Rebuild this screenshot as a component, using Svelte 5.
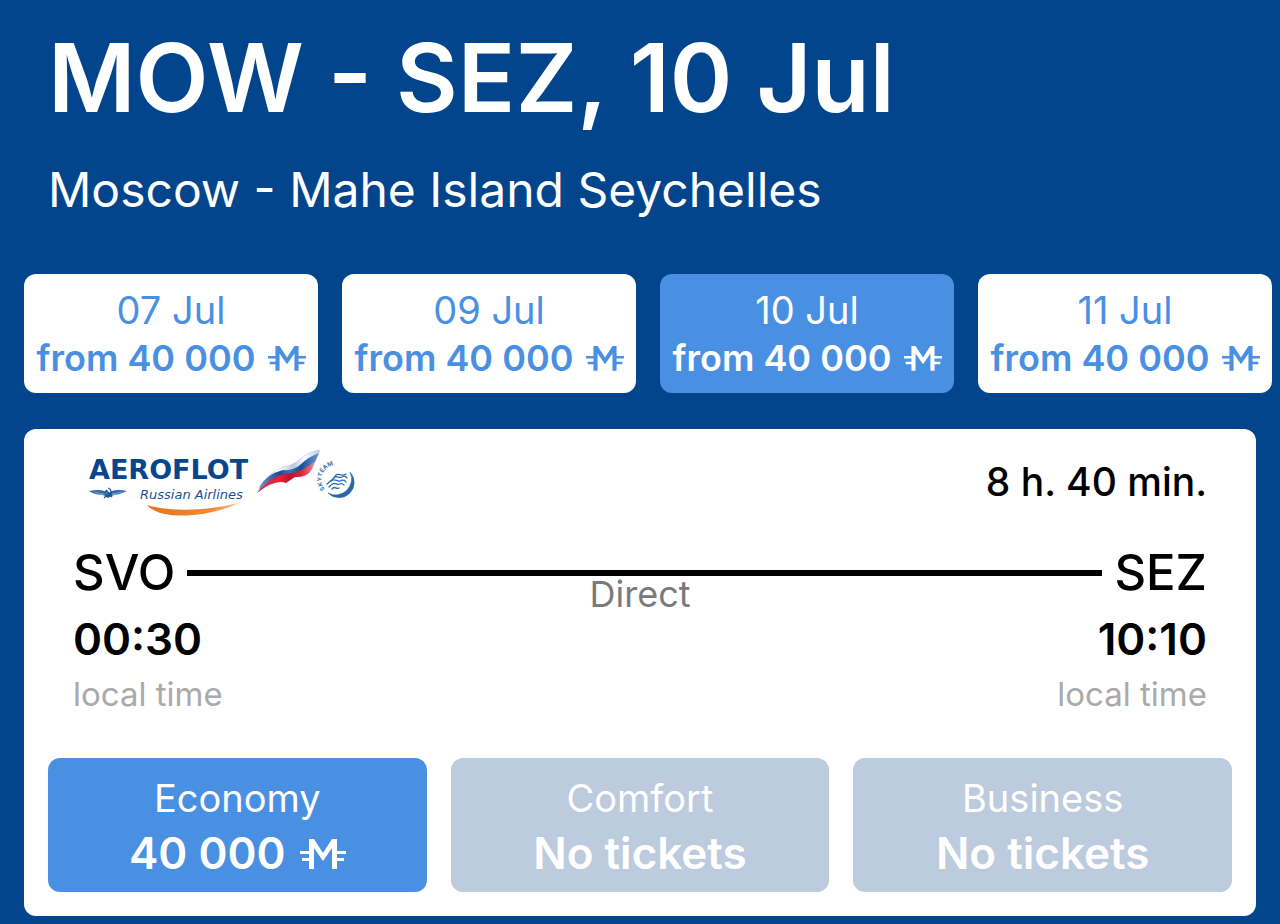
<script>
  const dates = ['07 Jul', '09 Jul', '10 Jul', '11 Jul'];
  let selected = $state('10 Jul');

  const fares = [
    { name: 'Economy', price: '40 000', available: true },
    { name: 'Comfort', price: 'No tickets', available: false },
    { name: 'Business', price: 'No tickets', available: false }
  ];
</script>

{#snippet mile()}
  <svg class="mile" viewBox="0 0 46 30" role="img" aria-label="miles">
    <path d="M9 30V0h5l9 14 9-14h5v30h-5V9l-9 13-9-13v21z M0 12h11v3H0z M2 19h9v3H2z M35 12h11v3H35z M35 19h9v3h-9z" fill="currentColor" />
  </svg>
{/snippet}

<main>
  <header>
    <h1>MOW - SEZ, 10 Jul</h1>
    <p>Moscow - Mahe Island Seychelles</p>
  </header>

  <nav class="dates" aria-label="Departure dates">
    {#each dates as date}
      <button class="date" class:active={selected === date} aria-pressed={selected === date} onclick={() => (selected = date)}>
        <span class="day">{date}</span>
        <span class="from">from 40 000 {@render mile()}</span>
      </button>
    {/each}
  </nav>

  <article class="card">
    <div class="top">
      <svg class="logo" viewBox="0 0 290 76" role="img" aria-label="Aeroflot Russian Airlines, SkyTeam">
        <defs>
          <linearGradient id="swoosh"><stop offset="0" stop-color="#e8741c" /><stop offset=".7" stop-color="#f08a35" /><stop offset="1" stop-color="#f8c795" /></linearGradient>
          <linearGradient id="white"><stop offset="0" stop-color="#cfd9ea" /><stop offset=".35" stop-color="#ffffff" /><stop offset=".58" stop-color="#b9c6dc" /><stop offset=".75" stop-color="#f8fbff" /><stop offset="1" stop-color="#b5cbe2" /></linearGradient>
          <linearGradient id="blue"><stop offset="0" stop-color="#7295cb" /><stop offset=".35" stop-color="#174a9b" /><stop offset=".5" stop-color="#3b72ba" /><stop offset=".7" stop-color="#164e9e" /><stop offset="1" stop-color="#6b9bd0" /></linearGradient>
          <linearGradient id="red"><stop offset="0" stop-color="#b63855" /><stop offset=".4" stop-color="#ed1f35" /><stop offset=".58" stop-color="#b51535" /><stop offset=".75" stop-color="#e3202f" /><stop offset="1" stop-color="#ef8790" /></linearGradient>
          <path id="team-arc" d="M253 44A14 14 0 0 1 275 25" />
        </defs>
        <text class="brand" x="17" y="34">AEROFLOT</text>
        <path d="M17 46Q28 44 32 46L36 48L40 46Q45 44 55 46Q49 49 42 50L36 53L31 50Q23 50 17 46Z" fill="#2d6aa8" />
        <path d="M22 47L32 49M24 49L33 50M40 49L50 47M40 50L48 49" stroke="#9dbdd9" stroke-width=".6" />
        <path d="M36 43A4 4 0 1 1 34 51M34 45L40 52M33 47L35 45M34 51L32 53" fill="none" stroke="#1b5395" stroke-width="1.200" />
        <text class="sub" x="68" y="54">Russian Airlines</text>
        <path d="M75 60C88 76 137 73 169 57C143 65 101 68 75 60Z" fill="url(#swoosh)" />
        <path d="M185 48Q195 27 211 22Q222 20 228 14Q235 7 248 5L240 24Q235 33 222 32C206 30 199 37 185 48Z" fill="url(#white)" stroke="#b6c6dc" stroke-width=".5" />
        <path d="M188 41Q195 29 211 25Q221 26 228 20Q236 12 247 8L243 17Q234 28 223 29Q211 29 204 33Q195 36 187 45Z" fill="url(#blue)" />
        <path d="M185 48Q192 38 202 33Q211 28 221 28Q233 25 243 16L240 24Q235 33 223 32L214 38Q203 34 185 48Z" fill="url(#red)" />
        <text class="team"><textPath href="#team-arc">SKYTEAM</textPath></text>
        <path d="M278 27A15 15 0 0 1 256 48A16 16 0 0 0 278 27Z" fill="#2868aa" stroke="#2868aa" stroke-width=".5" />
        <g fill="none" stroke="#2d6eae" stroke-width="1.300" stroke-linecap="round">
          <path d="M262 33C266 25 268 33 274 29" />
          <path d="M259 36C265 28 266 34 270 32Q273 30 275 33" />
          <path d="M255 39C263 31 264 37 268 36Q272 34 274 37" />
          <path d="M257 42C263 35 264 41 268 39Q270 38 272 40" />
          <path d="M260 44C263 40 264 45 267 43" />
        </g>
      </svg>
      <span class="duration">8 h. 40 min.</span>
    </div>

    <div class="route">
      <span class="airport">SVO</span>
      <span class="line"></span>
      <span class="airport">SEZ</span>
    </div>
    <div class="times">
      <div><time>00:30</time><small>local time</small></div>
      <span class="direct">Direct</span>
      <div class="arrival"><time>10:10</time><small>local time</small></div>
    </div>

    <div class="fares">
      {#each fares as fare}
        <button class="fare" disabled={!fare.available}>
          <span class="name">{fare.name}</span>
          <span class="price">{fare.price}{#if fare.available}{' '}{@render mile()}{/if}</span>
        </button>
      {/each}
    </div>
  </article>
</main>

<style>
  :global(body) { margin: 0; background: #02458d; }
  main { font-family: Inter, sans-serif; color: #fff; padding-bottom: 8px; overflow: hidden; }
  header { padding: 18px 48px 0; }
  h1, p { margin: 0; white-space: nowrap; }
  h1 { font-size: 95px; line-height: 120px; font-weight: 600; }
  p { margin-top: 22px; font-size: 48px; line-height: 60px; }
  button { font-family: inherit; border: 0; border-radius: 12px; display: flex; flex-direction: column; align-items: center; white-space: nowrap; }
  .dates { display: grid; grid-template-columns: repeat(4, 1fr); gap: 24px; padding: 54px 8px 0 24px; }
  .date { background: #fff; color: #4a90e2; padding: 12px 0 11px; }
  .date.active { background: #4a90e2; color: #fff; }
  .day, .name { font-size: 38px; line-height: 48px; font-weight: 400; }
  .from { font-size: 36px; line-height: 48px; font-weight: 600; }
  .mile { display: inline-block; width: 38px; height: auto; margin-left: 3px; }
  .card { margin: 36px 24px 0; padding: 16px 24px 24px; background: #fff; color: #000; border-radius: 12px; }
  .top { display: flex; justify-content: space-between; align-items: flex-start; padding-right: 25px; }
  .logo { width: 290px; height: 76px; margin-left: 24px; }
  .brand { font: bold 27px "DejaVu Sans", sans-serif; fill: #07468e; }
  .sub { font: italic 13px "DejaVu Sans", sans-serif; fill: #174f96; }
  .team { font: bold 6px Inter, sans-serif; fill: #3c75ae; }
  .duration { font-size: 39px; line-height: 48px; font-weight: 500; margin-top: 13px; }
  .route { display: flex; align-items: center; gap: 12px; padding: 22px 25px 0; }
  .airport { font-size: 49px; line-height: 60px; font-weight: 500; }
  .line { flex: 1; height: 6px; background: #000; }
  .times { display: flex; justify-content: space-between; align-items: flex-start; padding: 0 25px; }
  .times div { flex: 1; display: flex; flex-direction: column; padding-top: 9px; }
  .times .arrival { text-align: right; }
  time { font-size: 44px; line-height: 54px; font-weight: 600; }
  small { font-size: 33px; line-height: 56px; color: #aaa; }
  .direct { font-size: 36px; line-height: 40px; color: #7a7a7a; margin-top: -29px; }
  .fares { display: grid; grid-template-columns: repeat(3, 1fr); gap: 24px; margin-top: 36px; }
  .fare { background: #4a90e2; color: #fff; padding: 16px 0 8px; }
  .fare:disabled { background: #bccbdd; }
  .price { font-size: 44px; line-height: 62px; font-weight: 600; }
  .price .mile { width: 46px; }
</style>
